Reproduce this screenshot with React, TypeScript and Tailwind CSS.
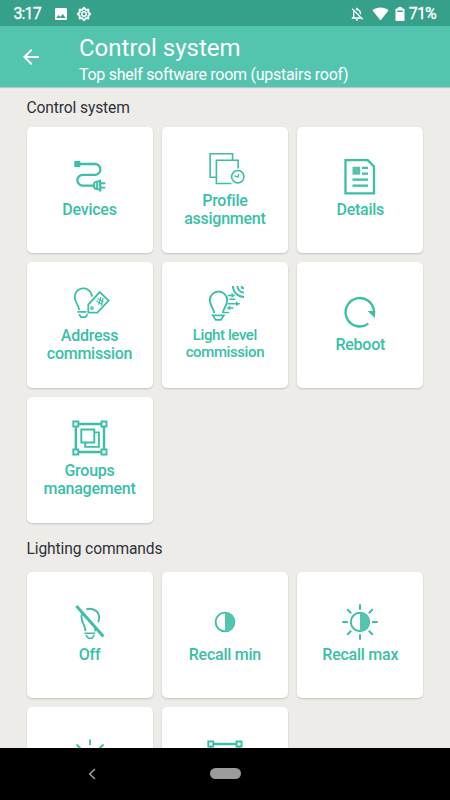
// App.tsx - Control system screen: sections with command tiles
import React from 'react';
import { MdArrowBack, MdImage, MdOutlineNotificationsOff } from 'react-icons/md';

interface Tile {
  id: string;
  lines: string[];
  icon: React.ReactNode;
  small?: boolean;
}

interface TileSection {
  title: string;
  titleClass: string;
  tiles: Tile[];
}

// Shared wrapper for the line icons of the tiles
const TileIcon: React.FC<{ children: React.ReactNode; strokeWidth?: number }> = ({ children, strokeWidth = 2 }) => (
  <svg
    viewBox="0 0 36 36"
    className="h-9 w-9 shrink-0 overflow-visible"
    fill="none"
    stroke="#3bbfa6"
    strokeWidth={strokeWidth}
  >
    {children}
  </svg>
);

const DevicesIcon = () => (
  <TileIcon strokeWidth={2.3}>
    <rect x="2.3" y="2" width="6" height="6" fill="#3bbfa6" stroke="none" />
    <path d="M8 5h15a5.3 5.3 0 0 1 0 10.8H10.8a5.4 5.4 0 0 0 0 10.8h10.5" />
    <path d="M28.200 20.600v11.900" strokeWidth="2.200" />
    <path d="M28 22l-4 .9c-1.5.4-2.2 1.6-2.2 3.5s.7 3.1 2.2 3.5l4 .9M25.2 23.2v6.6" strokeWidth="2" />
    <path d="M29 24.200h4.300M29 28.600h4.300" strokeWidth="1.900" />
  </TileIcon>
);

const ProfileIcon = () => (
  <TileIcon strokeWidth={1.6}>
    <path d="M9.4 27.2H3.1V3.700h22.500v6.300" />
    <path d="M24.3 33.500H9.400V10.200h21.700v8.200" />
    <circle cx="30.8" cy="26.700" r="6.200" />
    <path d="M27.3 25.700l3.700 1.400.7-3.100" strokeWidth="1.2" />
  </TileIcon>
);

const DetailsIcon = () => (
  <TileIcon strokeWidth={2.3}>
    <path d="M3.5 1.2h22.300l6.200 6.200v27H3.500z" />
    <rect x="10.5" y="7.700" width="7.600" height="8" fill="#53c5af" stroke="none" />
    <path d="M20 8.900h6M20 14.700h6M10.500 20.700h15.500M10.500 26.700h15.500" />
  </TileIcon>
);

const AddressIcon = () => (
  <TileIcon strokeWidth={1.8}>
    <path d="M7.2 25c0-4.500-4.500-7.300-4.500-13.200a8.700 8.700 0 0 1 17-2.400l.3 2.300" />
    <path d="M5.500 26.900h9M7 29.300l2 2.900h4.500l2-2.900" />
    <path d="M16.300 19.700L27.700 7.100l9 8.400L25.300 27.700h-9z" />
    <circle cx="20" cy="23.100" r="1.200" strokeWidth="1.300" />
    <path d="M25.600 13.500l6 3.500M24.500 16.100l6 3.500M28.800 12.100l-2 7.600M31.200 13.100l-2 7.600" strokeWidth="1.2" />
  </TileIcon>
);

const LightLevelIcon = () => (
  <TileIcon strokeWidth={1.9}>
    <path d="M7.200 28c0-4.500-4.400-7-4.400-12.800a8.700 8.700 0 0 1 17.400 0c0 5.800-4.300 8.300-4.300 12.800" />
    <path d="M5.700 30.300h11.200l-2.900 4.600H8.700z" strokeWidth="1.7" />
    <path d="M20.800 10.400h5M22.300 14.300h6.200M20.800 18.700h12M21.500 23h5M16 27.400h6.200" strokeWidth="1.5" />
    <path d="M24.500 7.800l3.500 2.600-3.500 2.600zM29 16.200l3.300 2.500-3.300 2.500zM23.300 20.400L19.800 23l3.500 2.600z" fill="#3bbfa6" stroke="none" />
    <path d="M25.900 1A11.100 11.100 0 0 0 37 12M30.400 1A6.600 6.600 0 0 0 37 7.600M34.600 1A2.400 2.400 0 0 0 37 3.400" />
  </TileIcon>
);

const RebootIcon = () => (
  <TileIcon strokeWidth={2.4}>
    <path d="M26.3 29.6A14.2 14.2 0 1 1 32 18" />
    <path d="M25.5 17.1h7.8l-.4 7z" fill="#3bbfa6" stroke="none" />
  </TileIcon>
);

// Selection frame with a handle in every corner
const GroupsIcon = () => (
  <TileIcon strokeWidth={1.9}>
    <path d="M7 4h22M7 32h22M3.8 7v22M32 7v22" strokeWidth="2.4" />
    <path d="M1.3 1.5h5v5h-5zM29.5 1.5h5v5h-5zM1.3 29.5h5v5h-5zM29.5 29.5h5v5h-5z" />
    <path d="M9.3 9.5h13v13h-13z" />
    <path d="M22.6 12.4h4.3v14.5H13.2v-4" />
  </TileIcon>
);

const OffIcon = () => (
  <TileIcon strokeWidth={1.9}>
    <path d="M14.3 5.4c6.6-2.3 12.9 2.2 12.9 8.4 0 1.9-.5 3.1-1.1 4.4" />
    <path d="M10 10.3c-2.6 6.3 3.3 9.2 3.5 17M23.9 23l-.9 4.3" />
    <path d="M12.4 29.3h10.8M13.8 30.9l2.6 3.4h3.6l2.4-3.4" strokeWidth="1.6" />
    <path d="M4.4 2l27 30.6" strokeWidth="3" />
  </TileIcon>
);

const RecallMinIcon = () => (
  <TileIcon>
    <circle cx="18" cy="18" r="9.4" strokeWidth="1.9" />
    <path d="M18 8.6a9.4 9.4 0 0 1 0 18.8z" fill="#53c5af" stroke="none" />
  </TileIcon>
);

const RecallMaxIcon = () => (
  <TileIcon>
    <circle cx="18" cy="18" r="9.2" strokeWidth="1.9" />
    <path d="M18 8.6a9.4 9.4 0 0 1 0 18.8z" fill="#53c5af" stroke="none" />
    <path d="M18 .3v5.5M18 30.2v5.5M.3 18h5.6M30.1 18h5.6M5.2 5.2l4 4M26.8 26.8l4 4M5.2 30.8l4-4M26.8 9.2l4-4" />
  </TileIcon>
);

// Only the top of this one shows above the navigation bar
const RaysIcon = () => (
  <TileIcon strokeWidth={1.8}>
    <circle cx="18" cy="20" r="8.5" />
    <path d="M18-.5v5.5M4.5 4.5l4 4M27.5 8.5l4-4M.3 18h5.6M30.1 18h5.6" />
  </TileIcon>
);

const sections: TileSection[] = [
  {
    title: 'Control system',
    titleClass: 'h-[39.7px] pt-[2px]',
    tiles: [
      { id: 'devices', lines: ['Devices'], icon: <DevicesIcon /> },
      { id: 'profile', lines: ['Profile', 'assignment'], icon: <ProfileIcon /> },
      { id: 'details', lines: ['Details'], icon: <DetailsIcon /> },
      { id: 'address', lines: ['Address', 'commission'], icon: <AddressIcon /> },
      { id: 'light', lines: ['Light level', 'commission'], icon: <LightLevelIcon />, small: true },
      { id: 'reboot', lines: ['Reboot'], icon: <RebootIcon /> },
      { id: 'groups', lines: ['Groups', 'management'], icon: <GroupsIcon /> }
    ]
  },
  {
    title: 'Lighting commands',
    titleClass: 'h-[48.5px] pt-[2.5px]',
    tiles: [
      { id: 'off', lines: ['Off'], icon: <OffIcon /> },
      { id: 'min', lines: ['Recall min'], icon: <RecallMinIcon /> },
      { id: 'max', lines: ['Recall max'], icon: <RecallMaxIcon /> },
      { id: 'level', lines: [''], icon: <RaysIcon /> },
      { id: 'scene', lines: [''], icon: <GroupsIcon /> }
    ]
  }
];

const StatusBar = () => (
  <div className="flex h-[26px] shrink-0 items-center justify-between bg-[#36a18b] pt-px pr-[14px] pl-[13.5px] text-white">
    <div className="flex items-center">
      <span className="w-[39px] text-base leading-none tracking-[-0.9px] [-webkit-text-stroke:0.3px_white]">3:17</span>
      <MdImage size={16} />
      <svg viewBox="0 0 14 14" className="ml-2 h-3.5 w-3.5 overflow-visible" fill="none" stroke="white">
        <path d="M7 .9l1.8 1.8h2.5v2.5L13.1 7l-1.8 1.8v2.5H8.8L7 13.1l-1.8-1.8H2.7V8.8L.9 7l1.8-1.8V2.7h2.5z" strokeWidth="1.9" />
        <circle cx="7" cy="7" r="2.2" strokeWidth="1.5" />
      </svg>
    </div>
    <div className="flex items-center">
      <MdOutlineNotificationsOff size={16} />
      <svg viewBox="0 0 17 14" className="ml-[7px] h-3.5 w-[17px]" fill="white">
        <path d="M.4 3.2C5.2-.5 11.8-.5 16.6 3.2L8.5 13.5z" />
      </svg>
      <svg viewBox="0 0 10 14" className="ml-1.5 h-3.5 w-2.5" fill="white">
        <path fillRule="evenodd" d="M3.2 0h3.6v1.4H8.5a1 1 0 0 1 1 1V13a1 1 0 0 1-1 1h-7a1 1 0 0 1-1-1V2.4a1 1 0 0 1 1-1h1.7zM2.4 3.4v1.6h5.2V3.4z" />
      </svg>
      <span className="ml-1 text-base leading-none tracking-[-0.8px] [-webkit-text-stroke:0.3px_white]">71%</span>
    </div>
  </div>
);

const AppBar = () => (
  <header className="flex h-[61px] shrink-0 items-center bg-[#53c4ae] text-white shadow-[0_1px_1px_rgba(0,0,0,0.18)]">
    <div className="w-[79px] pl-[19px]">
      <MdArrowBack size={24} />
    </div>
    <div className="pt-[6px]">
      <h1 className="text-2xl leading-[29px]">Control system</h1>
      <p className="text-base leading-[23px] tracking-[-0.27px]">Top shelf software room (upstairs roof)</p>
    </div>
  </header>
);

const TileCard: React.FC<{ tile: Tile }> = ({ tile }) => (
  <button
    className={`flex h-[126px] w-[126px] flex-col items-center justify-center gap-1.5 rounded-[5px] bg-white font-medium text-[#39bfa5] shadow-[0_1px_2px_rgba(0,0,0,0.18)] ${
      tile.small ? 'pb-[5px]' : 'pb-0.5'
    }`}
  >
    {tile.icon}
    <span
      className={`flex flex-col items-center ${
        tile.small ? 'text-[15px] leading-[17px] tracking-[-0.4px]' : 'text-base leading-[18px] tracking-[-0.25px]'
      }`}
    >
      {tile.lines.map((line, index) => (
        <span key={index} className="block min-h-[17px] whitespace-nowrap">{line}</span>
      ))}
    </span>
  </button>
);

const NavigationBar = () => (
  <nav className="grid h-[52.5px] shrink-0 grid-cols-[183px_84px_183px] items-center justify-items-center bg-black">
    <svg viewBox="0 0 8 12" className="h-3 w-2" fill="none" stroke="#a0a0a0" strokeWidth="1.5">
      <path d="M7 1L1.7 6 7 11" />
    </svg>
    <div className="h-[11px] w-[31px] rounded-full bg-[#9b9b9b]" />
  </nav>
);

const App: React.FC = () => (
  <div className="flex h-[800px] w-[450px] flex-col overflow-hidden bg-[#edece8] font-[Roboto,sans-serif]">
    <StatusBar />
    <AppBar />
    <main className="min-h-0 flex-1 overflow-hidden pl-[26.5px]">
      {sections.map(section => (
        <section key={section.title}>
          <h2 className={`flex items-center text-[15.6px] leading-5 tracking-[-0.12px] text-[#2d3238] ${section.titleClass}`}>
            {section.title}
          </h2>
          <div className="grid grid-cols-[126px_126px_126px] gap-[9.4px]">
            {section.tiles.map(tile => (
              <TileCard key={tile.id} tile={tile} />
            ))}
          </div>
        </section>
      ))}
    </main>
    <NavigationBar />
  </div>
);

export default App;
